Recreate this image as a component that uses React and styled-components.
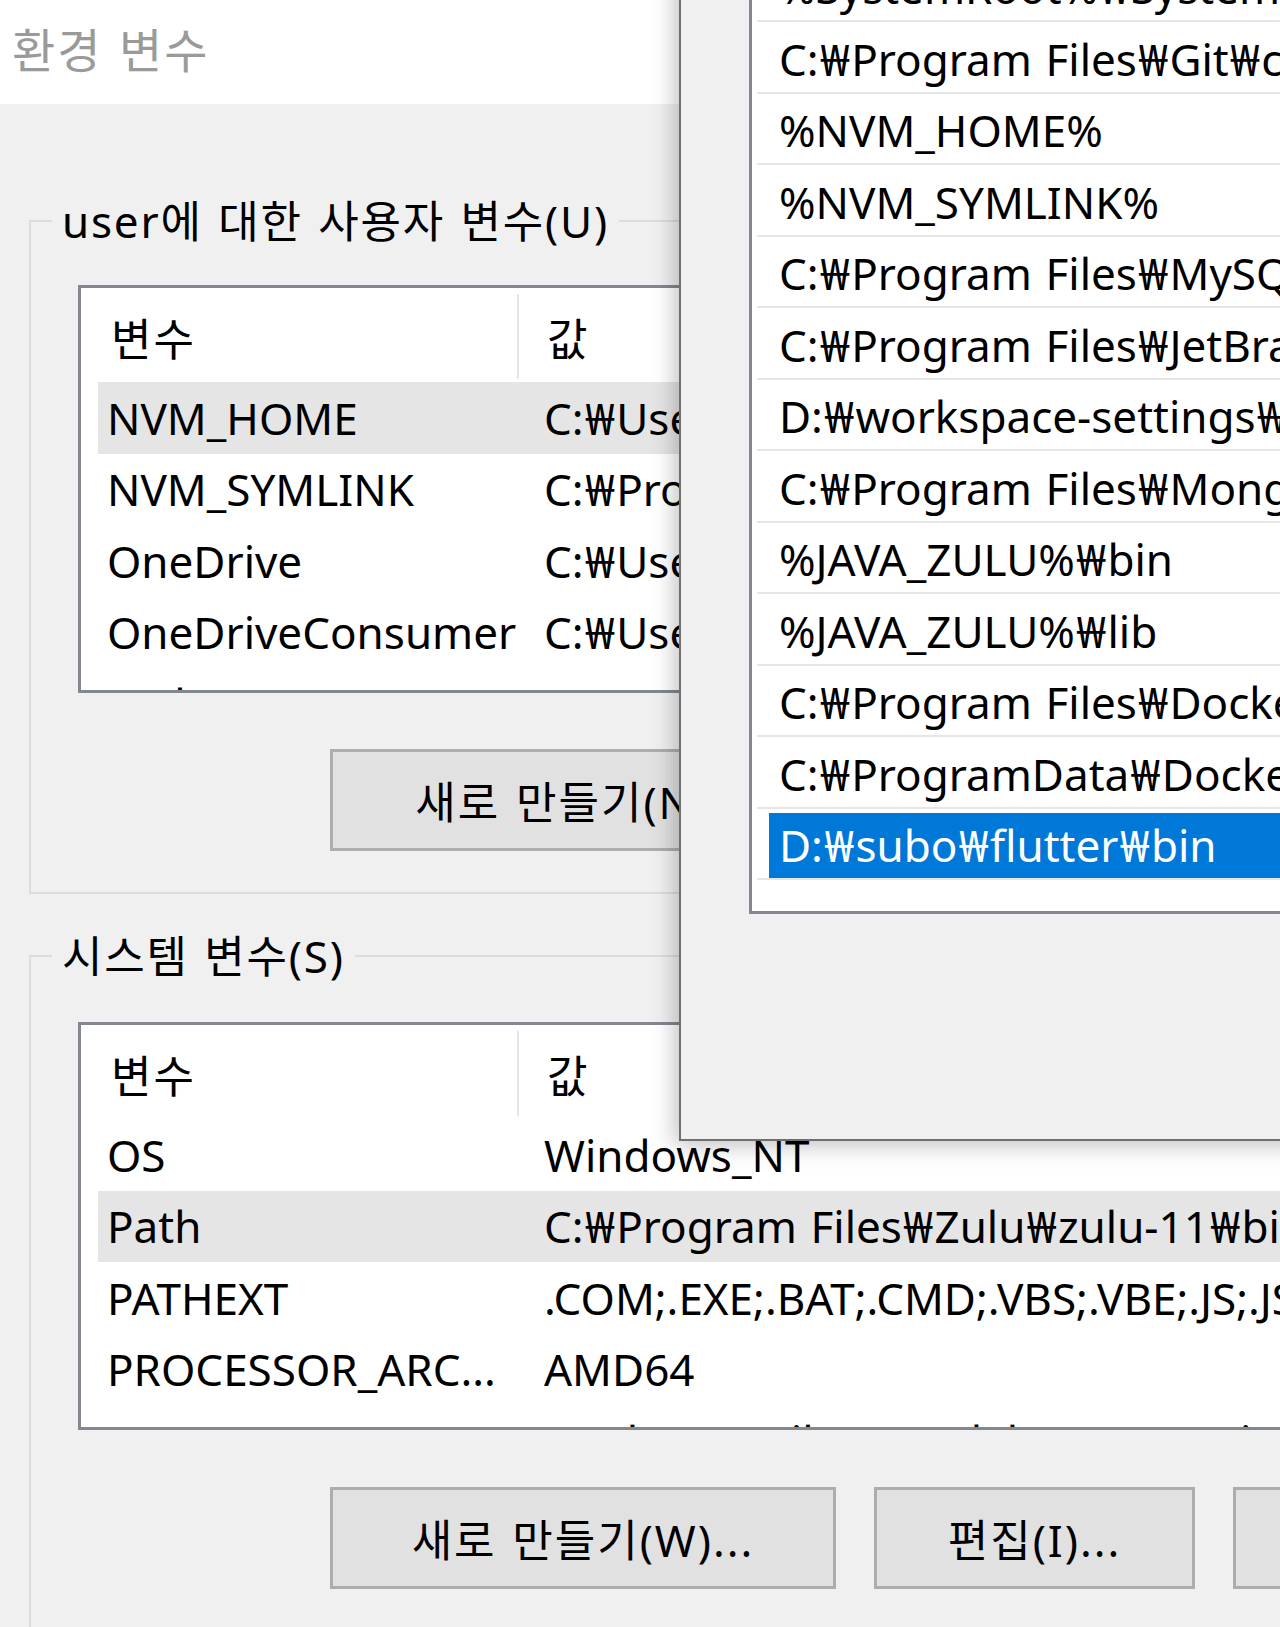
import React from "react";
import styled, { createGlobalStyle } from "styled-components";

const GlobalStyle = createGlobalStyle`
  html, body {
    margin: 0;
    padding: 0;
    background: #f0f0f0;
  }
`;

const Page = styled.div`
  position: relative;
  width: 1280px;
  height: 1627px;
  overflow: hidden;
  background: #f0f0f0;
  font-family: "Noto Sans", "Noto Sans CJK KR", sans-serif;
  font-size: 44px;
  word-spacing: 0.05em;
  color: #000;
`;

const TitleBar = styled.div`
  height: 104px;
  box-sizing: border-box;
  padding: 0 0 10px 12px;
  display: flex;
  align-items: center;
  background: #fff;
  color: #9a9a9a;
  font-size: 47px;
  letter-spacing: 2px;
`;

const Body = styled.div`
  padding-left: 29px;
`;

const Group = styled.fieldset`
  margin: ${(p) => p.top}px 0 0 0;
  padding: 0 0 ${(p) => p.bottom}px 0;
  width: 1400px;
  min-width: 0;
  border: 2px solid #dcdcdc;
`;

const Legend = styled.legend`
  margin-left: 21px;
  padding: 0 10px;
  line-height: 52px;
  letter-spacing: 1.8px;
`;

const ListView = styled.div`
  box-sizing: border-box;
  margin: ${(p) => p.top}px 0 0 47px;
  width: 1400px;
  height: 408px;
  border: 3px solid #828790;
  background: #fff;
  overflow: hidden;
`;

const HeaderRow = styled.div`
  height: 94px;
  display: grid;
  grid-template-columns: 438px 1fr;
`;

const HeaderCell = styled.div`
  height: 85px;
  margin-top: 6px;
  padding-left: ${(p) => p.pad}px;
  display: flex;
  align-items: center;
  letter-spacing: 2px;
  border-right: ${(p) => (p.divider ? "2px solid #e5e5e5" : "none")};
`;

const Row = styled.div`
  margin-left: 17px;
  height: 71.5px;
  display: grid;
  grid-template-columns: 437px 1fr;
  background: ${(p) => (p.selected ? "#e5e5e5" : "transparent")};
`;

const Cell = styled.div`
  padding-left: 9px;
  display: flex;
  align-items: center;
  white-space: nowrap;
  overflow: hidden;
`;

const ButtonRow = styled.div`
  display: flex;
  gap: 38px;
  margin: ${(p) => p.top}px 0 0 299px;
`;

const Button = styled.div`
  box-sizing: border-box;
  width: ${(p) => p.w}px;
  height: 102px;
  flex-shrink: 0;
  display: flex;
  align-items: center;
  justify-content: center;
  white-space: nowrap;
  letter-spacing: 2px;
  background: #e1e1e1;
  border: 3px solid #adadad;
`;

/* Malgun Gothic draws the backslash as a wide won sign */
const Won = styled.span`
  display: inline-block;
  width: 0.74em;
  text-align: center;
`;

/* the "환경 변수 편집" window lying on top of the main dialog */
const EditWindow = styled.div`
  position: absolute;
  left: 679px;
  top: -80px;
  width: 720px;
  height: 1221px;
  box-sizing: border-box;
  padding: 27.5px 0 0 68px;
  background: #f0f0f0;
  border-left: 2px solid #6f6f6f;
  border-bottom: 2px solid #6f6f6f;
  box-shadow: 0 0 22px 4px rgba(0, 0, 0, 0.25);
`;

const EditList = styled.div`
  box-sizing: border-box;
  width: 800px;
  height: 966px;
  border: 3px solid #828790;
  border-right: none;
  background: #fff;
  overflow: hidden;
`;

const EditItem = styled.div`
  box-sizing: border-box;
  height: 71.5px;
  margin-left: 5px;
  padding: 4px 0 0 12px;
  display: flex;
  border-bottom: 2px solid #e6e6e6;
`;

const EditText = styled.div`
  flex: 1;
  padding-left: 10px;
  display: flex;
  align-items: center;
  white-space: pre;
  background: ${(p) => (p.selected ? "#0078d7" : "transparent")};
  color: ${(p) => (p.selected ? "#fff" : "#000")};
`;

const PathText = ({ text }) => (
  <span>
    {text.split("₩").map((part, i) => (
      <React.Fragment key={i}>
        {i > 0 && <Won>₩</Won>}
        {part}
      </React.Fragment>
    ))}
  </span>
);

const userVars = [
  ["NVM_HOME", "C:₩Users₩user₩AppData₩Roaming₩nvm", true],
  ["NVM_SYMLINK", "C:₩Program Files₩nodejs"],
  ["OneDrive", "C:₩Users₩user₩OneDrive"],
  ["OneDriveConsumer", "C:₩Users₩user₩OneDrive"],
  ["Path", "C:₩Users₩user₩AppData₩Local₩Microsoft₩WindowsApps;"],
];

const systemVars = [
  ["OS", "Windows_NT"],
  ["Path", "C:₩Program Files₩Zulu₩zulu-11₩bin₩;C:₩Windows₩system32", true],
  ["PATHEXT", ".COM;.EXE;.BAT;.CMD;.VBS;.VBE;.JS;.JSE;.WSF;.WSH;.MSC"],
  ["PROCESSOR_ARC...", "AMD64"],
  ["PROCESSOR_IDE...", "Intel64 Family 6 Model 158 Stepping 10, GenuineIntel"],
];

const pathEntries = [
  "%SystemRoot%₩System32₩WindowsPowerShell₩v1.0₩",
  "C:₩Program Files₩Git₩cmd",
  "%NVM_HOME%",
  "%NVM_SYMLINK%",
  "C:₩Program Files₩MySQL₩MySQL Server 8.0₩bin",
  "C:₩Program Files₩JetBrains₩IntelliJ IDEA₩bin",
  "D:₩workspace-settings₩gradle₩bin",
  "C:₩Program Files₩MongoDB₩Server₩5.0₩bin",
  "%JAVA_ZULU%₩bin",
  "%JAVA_ZULU%₩lib",
  "C:₩Program Files₩Docker₩Docker₩resources₩bin",
  "C:₩ProgramData₩DockerDesktop₩version-bin",
  "D:₩subo₩flutter₩bin",
];

const VarList = ({ top, rows }) => (
  <ListView top={top}>
    <HeaderRow>
      <HeaderCell pad={30} divider>변수</HeaderCell>
      <HeaderCell pad={28}>값</HeaderCell>
    </HeaderRow>
    {rows.map(([name, value, selected]) => (
      <Row key={name} selected={selected}>
        <Cell>{name}</Cell>
        <Cell>
          <PathText text={value} />
        </Cell>
      </Row>
    ))}
  </ListView>
);

const App = () => {
  return (
    <Page>
      <GlobalStyle />
      <TitleBar>환경 변수</TitleBar>
      <Body>
        <Group top={91} bottom={41}>
          <Legend>user에 대한 사용자 변수(U)</Legend>
          <VarList top={38} rows={userVars} />
          <ButtonRow top={56}>
            <Button w={506}>새로 만들기(N)...</Button>
            <Button w={321}>편집(E)...</Button>
            <Button w={321}>삭제(D)</Button>
          </ButtonRow>
        </Group>
        <Group top={36} bottom={120}>
          <Legend>시스템 변수(S)</Legend>
          <VarList top={40} rows={systemVars} />
          <ButtonRow top={57}>
            <Button w={506}>새로 만들기(W)...</Button>
            <Button w={321}>편집(I)...</Button>
            <Button w={321}>삭제(L)</Button>
          </ButtonRow>
        </Group>
      </Body>
      <EditWindow>
        <EditList>
          {pathEntries.map((entry, i) => (
            <EditItem key={entry}>
              <EditText selected={i === pathEntries.length - 1}>
                <PathText text={entry} />
              </EditText>
            </EditItem>
          ))}
        </EditList>
      </EditWindow>
    </Page>
  );
};

export default App;
